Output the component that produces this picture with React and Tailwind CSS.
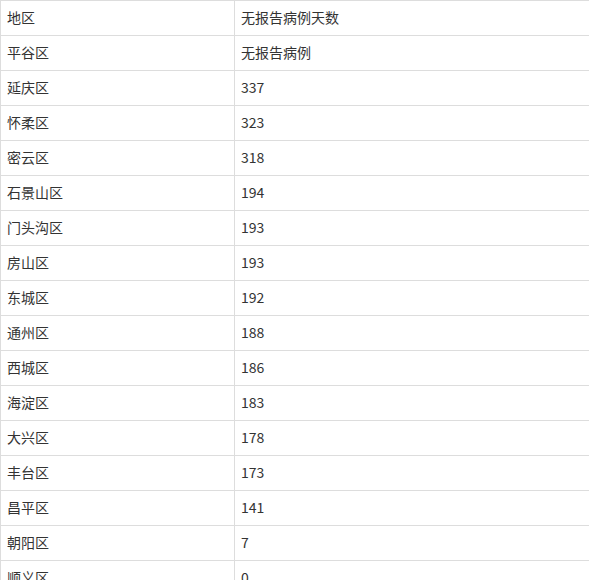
import React from "react";

const rows = [
  ["地区", "无报告病例天数"],
  ["平谷区", "无报告病例"],
  ["延庆区", "337"],
  ["怀柔区", "323"],
  ["密云区", "318"],
  ["石景山区", "194"],
  ["门头沟区", "193"],
  ["房山区", "193"],
  ["东城区", "192"],
  ["通州区", "188"],
  ["西城区", "186"],
  ["海淀区", "183"],
  ["大兴区", "178"],
  ["丰台区", "173"],
  ["昌平区", "141"],
  ["朝阳区", "7"],
  ["顺义区", "0"],
];

export default function App() {
  return (
    <div className="w-[589px] h-[580px] overflow-hidden bg-white">
      <table
        className="w-[590px] border-collapse text-[14px] text-[#333]"
        style={{ fontFamily: '"Noto Sans CJK SC", "Noto Sans", sans-serif' }}
      >
        <tbody>
          {rows.map((r, i) => (
            <tr key={i} className="h-[35px]">
              <td className="w-[234px] border border-[#ddd] px-[6px] pt-0 pb-[2px] align-middle leading-[20px]">{r[0]}</td>
              <td className="border border-[#ddd] px-[6px] pt-0 pb-[2px] align-middle leading-[20px]">{r[1]}</td>
            </tr>
          ))}
        </tbody>
      </table>
    </div>
  );
}
